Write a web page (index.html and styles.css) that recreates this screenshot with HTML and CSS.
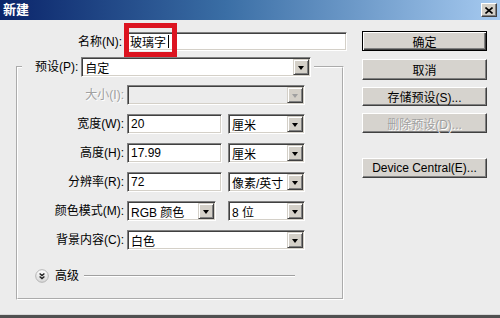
FILE: index.html
```html
<!DOCTYPE html>
<html lang="zh">
<head>
<meta charset="utf-8">
<title>新建</title>
<link rel="stylesheet" href="styles.css">
</head>
<body>
<div class="window">
  <div class="titlebar">
    <span class="title">新建</span>
    <span class="close"><svg width="8" height="7" viewBox="0 0 8 7"><path d="M0.5 0.5 L7.5 6.5 M7.5 0.5 L0.5 6.5" stroke="#000" stroke-width="1.6"/></svg></span>
  </div>
  <div class="content">
    <div class="left">
      <div class="name-row">
        <span class="lbl name-lbl">名称(N):</span>
        <div class="field name-field"><span>玻璃字</span><i class="caret"></i><div class="highlight"></div></div>
      </div>
      <fieldset class="group">
        <legend class="legend"><span class="lbl">预设(P):</span><div class="select preset"><span>自定</span><b class="arrow"></b></div></legend>
        <div class="form">
          <span class="lbl disabled">大小(I):</span>
          <div class="select disabled-select w-full"><span></span><b class="arrow off"></b></div>

          <span class="lbl">宽度(W):</span>
          <div class="pair"><div class="field num">20</div><div class="select unit"><span>厘米</span><b class="arrow"></b></div></div>

          <span class="lbl">高度(H):</span>
          <div class="pair"><div class="field num">17.99</div><div class="select unit"><span>厘米</span><b class="arrow"></b></div></div>

          <span class="lbl">分辨率(R):</span>
          <div class="pair"><div class="field num">72</div><div class="select unit"><span>像素/英寸</span><b class="arrow"></b></div></div>

          <span class="lbl">颜色模式(M):</span>
          <div class="pair"><div class="select mode"><span>RGB 颜色</span><b class="arrow"></b></div><div class="select unit"><span>8 位</span><b class="arrow"></b></div></div>

          <span class="lbl">背景内容(C):</span>
          <div class="select w-full"><span>白色</span><b class="arrow"></b></div>
        </div>
        <div class="advanced">
          <svg class="adv-icon" width="14" height="14" viewBox="0 0 14 14">
            <defs><linearGradient id="g" x1="0" y1="0" x2="0" y2="1"><stop offset="0" stop-color="#ffffff"/><stop offset="1" stop-color="#d6d6d6"/></linearGradient></defs>
            <circle cx="7" cy="7" r="6.3" fill="url(#g)" stroke="#b4b4b4" stroke-width="1"/>
            <path d="M4.6 4.4 L7 6.6 L9.4 4.4 M4.6 7.4 L7 9.6 L9.4 7.4" fill="none" stroke="#222" stroke-width="1.3"/>
          </svg>
          <span class="adv-text">高级</span>
          <span class="adv-line"></span>
        </div>
      </fieldset>
    </div>
    <div class="right">
      <div class="btn default b-ok">确定</div>
      <div class="btn b-cancel">取消</div>
      <div class="btn b-save">存储预设(S)...</div>
      <div class="btn b-del off-text">删除预设(D)...</div>
      <div class="btn b-dev">Device Central(E)...</div>
    </div>
  </div>
  <div class="bottom"></div>
</div>
</body>
</html>
```

FILE: styles.css
```css
html, body {
  margin: 0;
  padding: 0;
}
body {
  font-family: "Liberation Sans", "Noto Sans CJK SC", sans-serif;
  font-size: 12px;
  color: #000;
  background: #ececec;
}
.window {
  width: 500px;
  height: 318px;
  display: flex;
  flex-direction: column;
  background: #ececec;
  overflow: hidden;
}
.titlebar {
  height: 20px;
  flex: none;
  display: flex;
  align-items: center;
  background: linear-gradient(to right, #0a246a 0%, #3a6ea5 45%, #a6caf0 100%);
  padding-left: 3px;
  padding-right: 3px;
}
.title {
  color: #fff;
  font-weight: bold;
  font-size: 13px;
  line-height: 20px;
}
.close {
  margin-left: auto;
  width: 16px;
  height: 14px;
  box-sizing: border-box;
  background: #d4d0c8;
  border: 1px solid;
  border-color: #fff #404040 #404040 #fff;
  box-shadow: inset -1px -1px 0 #808080;
  display: flex;
  align-items: center;
  justify-content: center;
}
.content {
  flex: 1;
  display: flex;
}
.left {
  width: 362px;
  flex: none;
}
.name-row {
  margin-top: 12px;
  display: flex;
  align-items: center;
  height: 19px;
}
.lbl {
  white-space: nowrap;
  line-height: 20px;
}
.name-lbl {
  width: 122px;
  text-align: right;
  margin-right: 3px;
}
.field {
  position: relative;
  box-sizing: border-box;
  height: 20px;
  background: #fff;
  border: 1px solid;
  border-color: #808080 #fff #fff #808080;
  box-shadow: inset 1px 1px 0 #404040, inset -1px -1px 0 #d4d0c8;
  padding-left: 3px;
  display: flex;
  align-items: center;
  white-space: nowrap;
}
.name-field {
  width: 222px;
  height: 19px;
  padding-left: 4px;
}
.caret {
  display: inline-block;
  width: 1px;
  height: 13px;
  background: #000;
  margin-left: 2px;
}
.highlight {
  position: absolute;
  left: -2px;
  top: -10px;
  width: 53px;
  height: 34px;
  box-sizing: border-box;
  border: 5px solid #dc1420;
}
.group {
  margin: 6px 0 0 16px;
  width: 328px;
  box-sizing: border-box;
  border: 2px groove #fff;
  padding: 8px 0 15px 0;
  min-inline-size: 0;
}
.legend {
  margin-left: 4px;
  padding: 0 3px 0 13px;
  display: flex;
  align-items: center;
}
.legend .lbl {
  margin-right: 3px;
}
.select {
  box-sizing: border-box;
  height: 20px;
  background: #fff;
  border: 1px solid;
  border-color: #808080 #fff #fff #808080;
  box-shadow: inset 1px 1px 0 #404040, inset -1px -1px 0 #d4d0c8;
  padding: 1px;
  display: flex;
  align-items: center;
  white-space: nowrap;
}
.select span {
  padding-left: 2px;
  flex: 1;
  overflow: hidden;
}
.preset {
  width: 230px;
}
.arrow {
  flex: none;
  width: 16px;
  height: 16px;
  box-sizing: border-box;
  background: #d4d0c8;
  border: 1px solid;
  border-color: #d4d0c8 #404040 #404040 #d4d0c8;
  box-shadow: inset 1px 1px 0 #fff, inset -1px -1px 0 #808080;
  display: flex;
  align-items: center;
  justify-content: center;
}
.arrow::after {
  content: "";
  width: 0;
  height: 0;
  border-left: 3.5px solid transparent;
  border-right: 3.5px solid transparent;
  border-top: 4px solid #000;
  margin-top: 1px;
}
.arrow.off::after {
  border-top-color: #a0a0a0;
}
.form {
  display: grid;
  grid-template-columns: 106px 178px;
  column-gap: 3px;
  row-gap: 9px;
  align-items: center;
}
.form .lbl {
  text-align: right;
}
.disabled {
  color: #a0a0a0;
  text-shadow: 1px 1px 0 #fff;
}
.disabled-select {
  background: #ececec;
}
.w-full {
  width: 178px;
}
.pair {
  display: flex;
  justify-content: space-between;
  width: 178px;
}
.num {
  width: 95px;
}
.unit {
  width: 77px;
}
.mode {
  width: 89px;
}
.advanced {
  margin-top: 19px;
  margin-left: 17px;
  margin-right: 47px;
  height: 14px;
  display: flex;
  align-items: center;
}
.adv-icon {
  flex: none;
  display: block;
}
.adv-text {
  margin-left: 6px;
  font-size: 12px;
  line-height: 14px;
}
.adv-line {
  flex: 1;
  margin-left: 5px;
  height: 0;
  border-top: 1px solid #a0a0a0;
  border-bottom: 1px solid #fff;
}
.right {
  flex: none;
  width: 125px;
  display: flex;
  flex-direction: column;
}
.btn {
  box-sizing: border-box;
  height: 20px;
  background: #d6d3ce;
  border: 1px solid;
  border-color: #fff #404040 #404040 #fff;
  box-shadow: inset -1px -1px 0 #808080;
  display: flex;
  align-items: center;
  justify-content: center;
  white-space: nowrap;
}
.default {
  border: 1px solid #000;
  box-shadow: inset 1px 1px 0 #fff, inset -1px -1px 0 #404040, inset -2px -2px 0 #808080;
}
.b-ok { margin-top: 11px; }
.b-cancel { margin-top: 8px; height: 21px; }
.b-save { margin-top: 7px; height: 19px; }
.b-del { margin-top: 7px; }
.b-dev { margin-top: 25px; }
.off-text {
  color: #a0a0a0;
  text-shadow: 1px 1px 0 #fff;
}
.bottom {
  height: 3px;
  flex: none;
  background: #505050;
  border-top: 1px solid #d8d8d8;
}
```
